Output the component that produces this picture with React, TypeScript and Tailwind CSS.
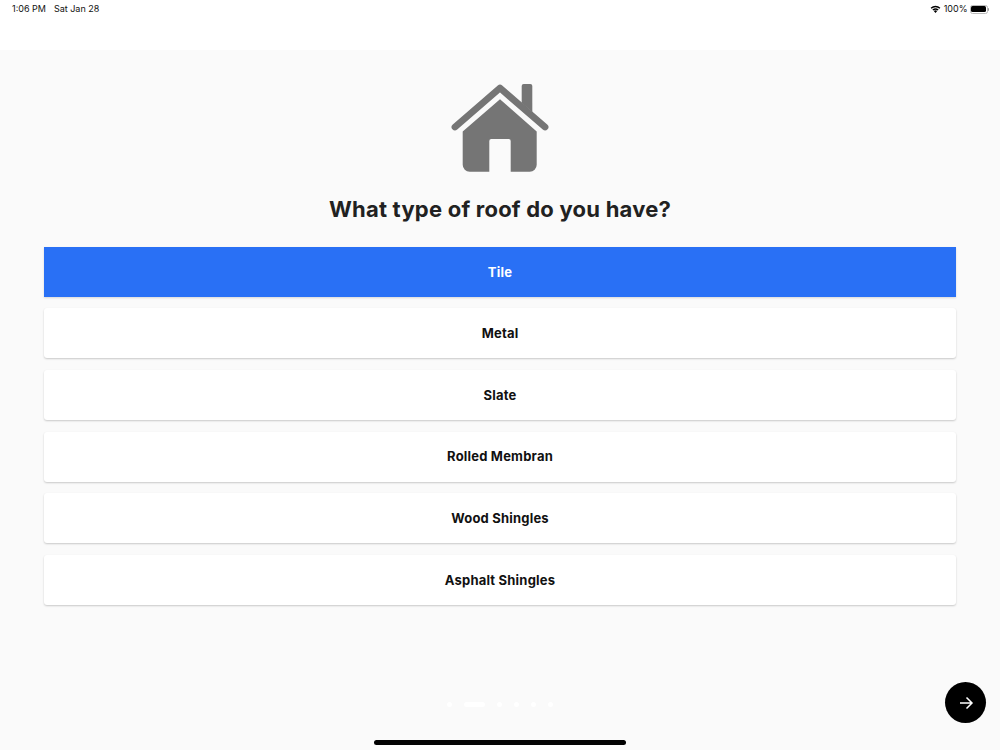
import React from "react";

const options = ["Tile", "Metal", "Slate", "Rolled Membran", "Wood Shingles", "Asphalt Shingles"];

function HouseIcon() {
  return (
    <svg width="100" height="92" viewBox="450 82 100 92" className="block">
      <polyline points="455,127 500,88 545,127" fill="none" stroke="#757575" strokeWidth="6.8" strokeLinecap="round" strokeLinejoin="round" />
      <path d="M521.7 100 V86 a2 2 0 0 1 2 -2 h6.6 a2 2 0 0 1 2 2 V112 L521.7 103 Z" fill="#757575" />
      <path fillRule="evenodd" fill="#757575" d="M500 99.3 L536.7 131.4 V164.7 a7 7 0 0 1 -7 7 H510.7 V141 a2 2 0 0 0 -2 -2 H491.3 a2 2 0 0 0 -2 2 V171.7 H469.7 a7 7 0 0 1 -7 -7 V131.4 Z" />
    </svg>
  );
}

export default function App() {
  return (
    <div className="relative flex h-[750px] w-[1000px] flex-col overflow-hidden bg-[#fafafa] font-['Inter','Liberation_Sans',sans-serif]">
      <header className="flex h-[50px] shrink-0 items-start justify-between bg-white pl-3 pr-[11px] pt-[3px] text-[9px] leading-[12px] text-[#111]">
        <div className="flex gap-[8px]">
          <span>1:06 PM</span>
          <span>Sat Jan 28</span>
        </div>
        <div className="flex items-center gap-[2px]">
          <svg width="11" height="8" viewBox="0 0 24 18" className="mr-[1px]">
            <path fill="#000" d="M12 18l-3.8-4.6a6 6 0 0 1 7.6 0zM5 10.4l2 2.2a7.6 7.6 0 0 1 10 0l2-2.2a10.6 10.6 0 0 0-14 0zM1 6l2 2.2a13.6 13.6 0 0 1 18 0L23 6a16.6 16.6 0 0 0-22 0z" />
          </svg>
          <span>100%</span>
          <div className="flex items-center">
            <div className="h-[9px] w-[18px] rounded-[2.5px] border border-[#bbb] p-[0.5px]">
              <div className="h-full w-full rounded-[1.5px] bg-black" />
            </div>
            <div className="ml-[0.5px] h-[3px] w-[1px] rounded-r-sm bg-[#999]" />
          </div>
        </div>
      </header>

      <main className="flex flex-1 flex-col items-center pt-[32px]">
        <HouseIcon />
        <h1 className="mt-[19px] text-[22px] font-bold leading-[32px] tracking-[0.22px] text-[#212121]">
          What type of roof do you have?
        </h1>
        <div className="mt-[21.8px] flex w-[912px] flex-col gap-[11.6px]">
          {options.map((o, i) => (
            <div
              key={o}
              className={
                i === 0
                  ? "flex h-[50px] items-center justify-center pt-[1px] bg-[#2970f5] text-[13px] font-bold tracking-[0.2px] text-white shadow-[0_1px_2px_rgba(0,0,0,0.14)]"
                  : "flex h-[50px] items-center justify-center pt-[1px] rounded-[3px] bg-white text-[13px] font-bold tracking-[0.2px] text-[#111] shadow-[0_1px_2px_rgba(0,0,0,0.2)]"
              }
            >
              {o}
            </div>
          ))}
        </div>
        <div className="mt-[97.2px] flex items-center gap-[12px]">
          <span className="h-[5px] w-[5px] rounded-full bg-white" />
          <span className="h-[5px] w-[21px] rounded-full bg-white" />
          <span className="h-[5px] w-[5px] rounded-full bg-white" />
          <span className="h-[5px] w-[5px] rounded-full bg-white" />
          <span className="h-[5px] w-[5px] rounded-full bg-white" />
          <span className="h-[5px] w-[5px] rounded-full bg-white" />
        </div>
      </main>

      <button className="absolute left-[945px] top-[682px] flex h-[41px] w-[41px] items-center justify-center rounded-full bg-black">
        <svg width="16" height="16" viewBox="0 0 16 16" fill="none" stroke="white" strokeWidth="1.5">
          <path d="M2 8 H14 M8.5 2.5 L14 8 L8.5 13.5" />
        </svg>
      </button>
      <div className="absolute left-[374px] top-[740px] h-[5px] w-[252px] rounded-full bg-black" />
    </div>
  );
}
